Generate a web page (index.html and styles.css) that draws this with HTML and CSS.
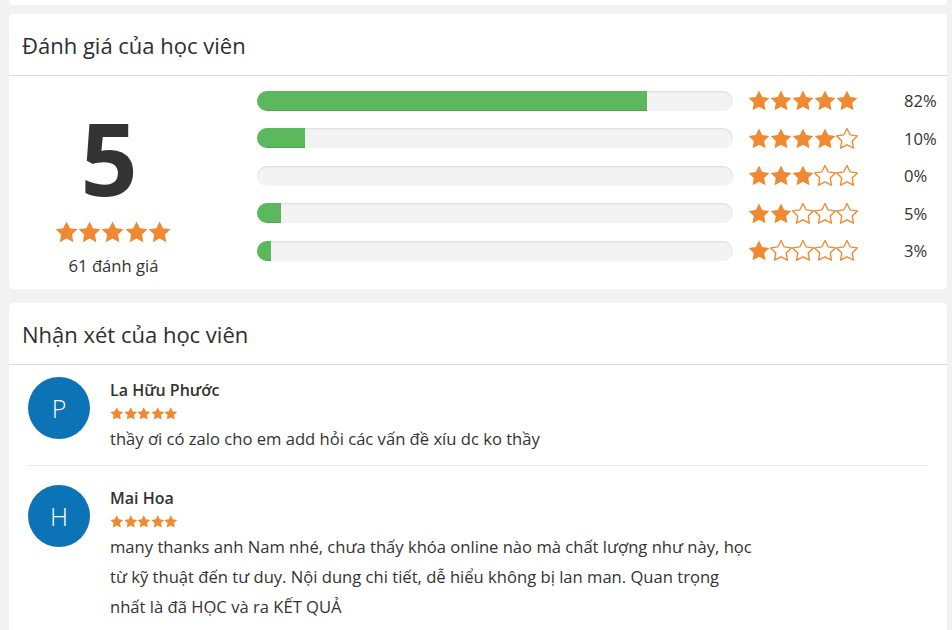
FILE: index.html
```html
<!DOCTYPE html>
<html lang="vi">
<head>
<meta charset="utf-8">
<title>Đánh giá</title>
<link rel="stylesheet" href="styles.css">
</head>
<body>
<svg class="defs" width="0" height="0" aria-hidden="true">
  <defs>
    <symbol id="star" viewBox="0 0 24 23">
      <polygon points="12,0.6 15.5,7.6 23.4,8.7 17.7,14.2 19.05,22.1 12,18.4 4.95,22.1 6.3,14.2 0.6,8.7 8.5,7.6" stroke-linejoin="round"/>
    </symbol>
  </defs>
</svg>

<div class="page">
  <div class="card card-prev"></div>

  <section class="card">
    <div class="card-head"><h3>Đánh giá của học viên</h3></div>
    <div class="rating-body">
      <div class="summary">
        <div class="big-score">5</div>
        <div class="stars stars-lg">
          <svg class="full"><use href="#star"/></svg><svg class="full"><use href="#star"/></svg><svg class="full"><use href="#star"/></svg><svg class="full"><use href="#star"/></svg><svg class="full"><use href="#star"/></svg>
        </div>
        <div class="count">61 đánh giá</div>
      </div>
      <div class="rows">
        <div class="row">
          <div class="track"><div class="fill" style="width:82%"></div></div>
          <div class="stars stars-md">
            <svg class="full"><use href="#star"/></svg><svg class="full"><use href="#star"/></svg><svg class="full"><use href="#star"/></svg><svg class="full"><use href="#star"/></svg><svg class="full"><use href="#star"/></svg>
          </div>
          <div class="pct">82%</div>
        </div>
        <div class="row">
          <div class="track"><div class="fill" style="width:10%"></div></div>
          <div class="stars stars-md">
            <svg class="full"><use href="#star"/></svg><svg class="full"><use href="#star"/></svg><svg class="full"><use href="#star"/></svg><svg class="full"><use href="#star"/></svg><svg class="empty"><use href="#star"/></svg>
          </div>
          <div class="pct">10%</div>
        </div>
        <div class="row">
          <div class="track"><div class="fill" style="width:0%"></div></div>
          <div class="stars stars-md">
            <svg class="full"><use href="#star"/></svg><svg class="full"><use href="#star"/></svg><svg class="full"><use href="#star"/></svg><svg class="empty"><use href="#star"/></svg><svg class="empty"><use href="#star"/></svg>
          </div>
          <div class="pct">0%</div>
        </div>
        <div class="row">
          <div class="track"><div class="fill" style="width:5%"></div></div>
          <div class="stars stars-md">
            <svg class="full"><use href="#star"/></svg><svg class="full"><use href="#star"/></svg><svg class="empty"><use href="#star"/></svg><svg class="empty"><use href="#star"/></svg><svg class="empty"><use href="#star"/></svg>
          </div>
          <div class="pct">5%</div>
        </div>
        <div class="row">
          <div class="track"><div class="fill" style="width:3%"></div></div>
          <div class="stars stars-md">
            <svg class="full"><use href="#star"/></svg><svg class="empty"><use href="#star"/></svg><svg class="empty"><use href="#star"/></svg><svg class="empty"><use href="#star"/></svg><svg class="empty"><use href="#star"/></svg>
          </div>
          <div class="pct">3%</div>
        </div>
      </div>
    </div>
  </section>

  <section class="card">
    <div class="card-head"><h3>Nhận xét của học viên</h3></div>
    <div class="reviews">
      <div class="review">
        <div class="avatar">P</div>
        <div class="review-content">
          <div class="name">La Hữu Phước</div>
          <div class="stars stars-sm">
            <svg class="full"><use href="#star"/></svg><svg class="full"><use href="#star"/></svg><svg class="full"><use href="#star"/></svg><svg class="full"><use href="#star"/></svg><svg class="full"><use href="#star"/></svg>
          </div>
          <p class="text">thầy ơi có zalo cho em add hỏi các vấn đề xíu dc ko thầy</p>
        </div>
      </div>
      <div class="review">
        <div class="avatar">H</div>
        <div class="review-content">
          <div class="name">Mai Hoa</div>
          <div class="stars stars-sm">
            <svg class="full"><use href="#star"/></svg><svg class="full"><use href="#star"/></svg><svg class="full"><use href="#star"/></svg><svg class="full"><use href="#star"/></svg><svg class="full"><use href="#star"/></svg>
          </div>
          <p class="text">many thanks anh Nam nhé, chưa thấy khóa online nào mà chất lượng như này, học từ kỹ thuật đến tư duy. Nội dung chi tiết, dễ hiểu không bị lan man. Quan trọng nhất là đã HỌC và ra KẾT QUẢ</p>
        </div>
      </div>
    </div>
  </section>
</div>
</body>
</html>
```
FILE: styles.css
```css
* { box-sizing: border-box; }
html, body { margin: 0; padding: 0; }
body {
  background: #f2f2f2;
  font-family: "Open Sans", "Noto Sans", sans-serif;
  font-size: 16.6px;
  color: #333;
  overflow: hidden;
}
.defs { position: absolute; width: 0; height: 0; overflow: hidden; }

.page {
  padding: 0 5px 0 9px;
  display: flex;
  flex-direction: column;
  gap: 14px;
}

.card {
  background: #fff;
  border-radius: 4px;
}
.card-prev {
  height: 5px;
  border-radius: 0 0 4px 4px;
  margin-bottom: -5px;
}

.card-head {
  height: 62px;
  display: flex;
  align-items: center;
  padding: 0 13px;
  border-bottom: 1px solid #dedede;
}
.card-head h3 {
  margin: 0;
  font-size: 22px;
  font-weight: 500;
  color: #2e2e2e;
}

/* stars */
.stars { display: flex; }
.stars svg { display: block; }
.stars .full { fill: #ef8a32; }
.stars .empty { fill: #fff; stroke: #ef8a32; stroke-width: 1.5; }
.stars-lg svg { width: 23.2px; height: 22px; }
.stars-md svg { width: 22px; height: 21px; }
.stars-sm svg { width: 13.6px; height: 13px; }

/* rating summary */
.rating-body {
  display: flex;
  padding: 0 10px 0 0;
}
.summary {
  width: 208px;
  display: flex;
  flex-direction: column;
  align-items: center;
  padding: 31px 0 11px;
}
.big-score {
  font-size: 100px;
  font-weight: 700;
  line-height: 100px;
  color: #333;
  padding-left: 2px;
  margin-right: 10px;
}
.stars-lg { margin-top: 14px; }
.count {
  margin-top: 11px;
  line-height: 24px;
  padding-left: 1px;
}

.rows {
  flex: 1;
  margin-left: 40px;
  padding-top: 6px;
  display: flex;
  flex-direction: column;
}
.row {
  height: 37.5px;
  display: flex;
  align-items: center;
}
.track {
  flex: 1;
  height: 20px;
  border-radius: 10px;
  background: #f3f3f3;
  box-shadow: inset 0 1px 2px rgba(0, 0, 0, 0.1);
  overflow: hidden;
}
.fill {
  height: 100%;
  background: #5cb85c;
  box-shadow: inset 0 -1px 0 rgba(0, 0, 0, 0.12);
}
.stars-md {
  margin-left: 15px;
  width: 110px;
}
.pct {
  margin-left: 46px;
  width: 33px;
  white-space: nowrap;
}

/* reviews */
.reviews {
  padding: 0 19px;
}
.review {
  display: flex;
  padding: 19px 0 11px;
  border-bottom: 1px solid #ebebeb;
}
.review:first-child { padding-top: 12px; }
.review:last-child { border-bottom: 0; }
.avatar {
  flex: none;
  width: 62px;
  height: 62px;
  border-radius: 50%;
  background: #0c73b6;
  color: #fff;
  display: flex;
  align-items: center;
  justify-content: center;
  font-size: 25px;
  font-weight: 300;
}
.review-content {
  margin-left: 20px;
  max-width: 645px;
}
.name {
  margin-top: 2px;
  line-height: 22px;
  font-size: 16px;
  font-weight: 600;
  color: #333;
}
.stars-sm { margin-top: 6px; }
.text {
  margin: 4px 0 0;
  line-height: 30px;
}
```
